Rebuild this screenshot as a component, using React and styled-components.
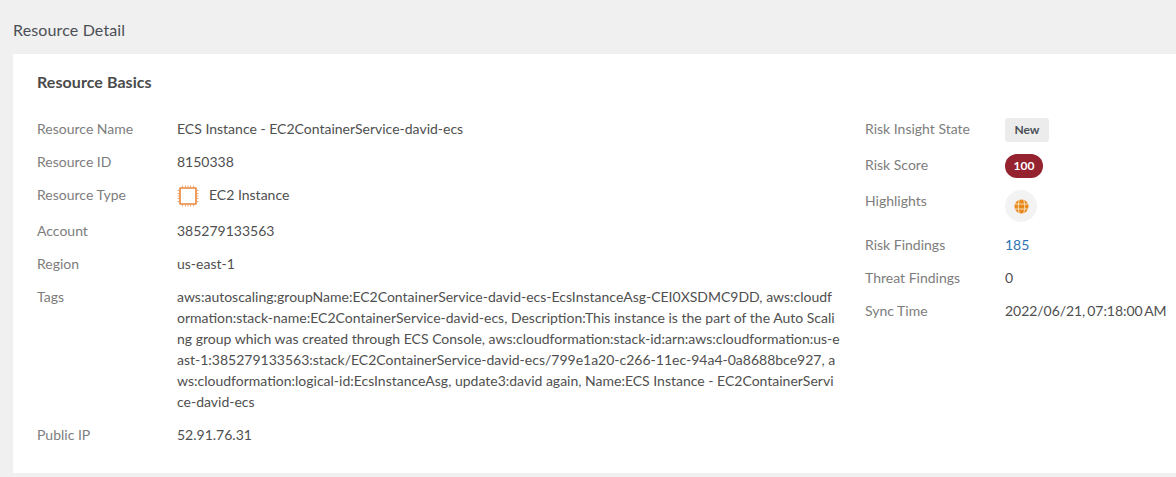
import React from "react";
import styled, { createGlobalStyle } from "styled-components";

const Global = createGlobalStyle`
  html, body { margin: 0; padding: 0; height: 100%; overflow: hidden; background: #f0f0f0; }
  body { font-family: Lato, "Liberation Sans", sans-serif; color: #4a4a4a; }
`;
const Page = styled.div`
  width: 1176px; height: 477px; box-sizing: border-box; padding: 0 0 4px 13px;
  display: flex; flex-direction: column; overflow: hidden;
`;
const PageTitle = styled.h1`
  margin: 0; height: 54px; display: flex; align-items: center; padding-top: 4px; box-sizing: border-box;
  font-size: 16px; font-weight: 400; color: #4a4f55; letter-spacing: 0.14px;
`;
const Card = styled.section`
  background: #fff; flex: 1; padding: 18px 0 0 24px; min-width: 0;
`;
const CardTitle = styled.h2`
  margin: 0 0 27px; font-size: 16px; line-height: 20px; font-weight: 700; color: #4a4a4a; letter-spacing: 0.07px;
`;
const Columns = styled.div`
  display: grid; grid-template-columns: 828px 1fr;
`;
const Col = styled.dl`
  margin: 0; display: grid; grid-template-columns: 140px 1fr; align-content: start;
`;
const RightCol = styled(Col)`margin-top: -1px;`;
const Label = styled.dt`
  font-size: 14px; line-height: 20px; color: #7d7d7d; margin-bottom: 13px;
`;
const RightLabel = styled(Label)`padding-top: 1px; margin-bottom: 12px;`;
const Value = styled.dd`
  margin: 0 0 13px; font-size: 14px; line-height: 20px; color: #4f4f4f;
`;
const RightValue = styled(Value)`margin-bottom: 12px; white-space: nowrap; padding-top: ${p => (p.$badge ? 0 : 1)}px;`;
const SyncValue = styled(RightValue)`word-spacing: -1.5px; letter-spacing: -0.05px;`;
const TypeValue = styled(Value)`
  display: flex; align-items: flex-start; gap: 10px; height: 23px;
`;
const TagsValue = styled(Value)`
  line-height: 21px; margin-top: -1px;
`;
const TagLine = styled.span`
  display: block; white-space: nowrap;
`;
const Link = styled.a`color: #2f74b5; text-decoration: none;`;
const Tag = styled.span`
  display: flex; align-items: center; justify-content: center; width: 44px; height: 24px;
  background: #ececec; border-radius: 3px; font-size: 12px; font-weight: 700; color: #4a4f55;
`;
const Score = styled.span`
  display: flex; align-items: center; justify-content: center; width: 38px; height: 24px;
  background: #95222f; border-radius: 12px; font-size: 12px; font-weight: 700; color: #fff;
`;
const IconDisc = styled.span`
  display: flex; align-items: center; justify-content: center; width: 32px; height: 32px;
  background: #f3f3f3; border-radius: 50%;
`;

const tagLines = [
  "aws:autoscaling:groupName:EC2ContainerService-david-ecs-EcsInstanceAsg-CEI0XSDMC9DD, aws:cloudf",
  "ormation:stack-name:EC2ContainerService-david-ecs, Description:This instance is the part of the Auto Scali",
  "ng group which was created through ECS Console, aws:cloudformation:stack-id:arn:aws:cloudformation:us-e",
  "ast-1:385279133563:stack/EC2ContainerService-david-ecs/799e1a20-c266-11ec-94a4-0a8688bce927, a",
  "ws:cloudformation:logical-id:EcsInstanceAsg, update3:david again, Name:ECS Instance - EC2ContainerServi",
  "ce-david-ecs",
];

const Chip = () => (
  <svg width="22" height="22" viewBox="0 0 22 22" fill="none" stroke="#e8873c">
    <rect x="3" y="3" width="16" height="16" rx="0.5" strokeWidth="1.6" />
    {[5.5, 8.5, 11, 13.5, 16.5].map(v => (
      <path key={v} d={`M${v} 0.5v2M${v} 19.5v2M0.5 ${v}h2M19.5 ${v}h2`} strokeWidth="1" opacity="0.7" />
    ))}
  </svg>
);
const Globe = () => (
  <svg width="15" height="15" viewBox="0 0 15 15" fill="none">
    <circle cx="7.5" cy="7.5" r="7" fill="#e8891c" />
    <path d="M1 5h13M1 10h13M5.2 1c-1.2 4-1.2 9 0 13M9.8 1c1.2 4 1.2 9 0 13" stroke="#fbe6cc" strokeWidth="0.9" />
  </svg>
);

export default function App() {
  return (
    <Page>
      <Global />
      <PageTitle>Resource Detail</PageTitle>
      <Card>
        <CardTitle>Resource Basics</CardTitle>
        <Columns>
          <Col>
            <Label>Resource Name</Label><Value>ECS Instance - EC2ContainerService-david-ecs</Value>
            <Label>Resource ID</Label><Value>8150338</Value>
            <Label>Resource Type</Label><TypeValue><Chip />EC2 Instance</TypeValue>
            <Label>Account</Label><Value>385279133563</Value>
            <Label>Region</Label><Value>us-east-1</Value>
            <Label>Tags</Label>
            <TagsValue>{tagLines.map(line => <TagLine key={line}>{line}</TagLine>)}</TagsValue>
            <Label>Public IP</Label><Value>52.91.76.31</Value>
          </Col>
          <RightCol>
            <RightLabel>Risk Insight State</RightLabel><RightValue $badge><Tag>New</Tag></RightValue>
            <RightLabel>Risk Score</RightLabel><RightValue $badge><Score>100</Score></RightValue>
            <RightLabel>Highlights</RightLabel><RightValue $badge><IconDisc><Globe /></IconDisc></RightValue>
            <RightLabel>Risk Findings</RightLabel><RightValue><Link>185</Link></RightValue>
            <RightLabel>Threat Findings</RightLabel><RightValue>0</RightValue>
            <RightLabel>Sync Time</RightLabel><SyncValue>2022/06/21, 07:18:00 AM</SyncValue>
          </RightCol>
        </Columns>
      </Card>
    </Page>
  );
}
